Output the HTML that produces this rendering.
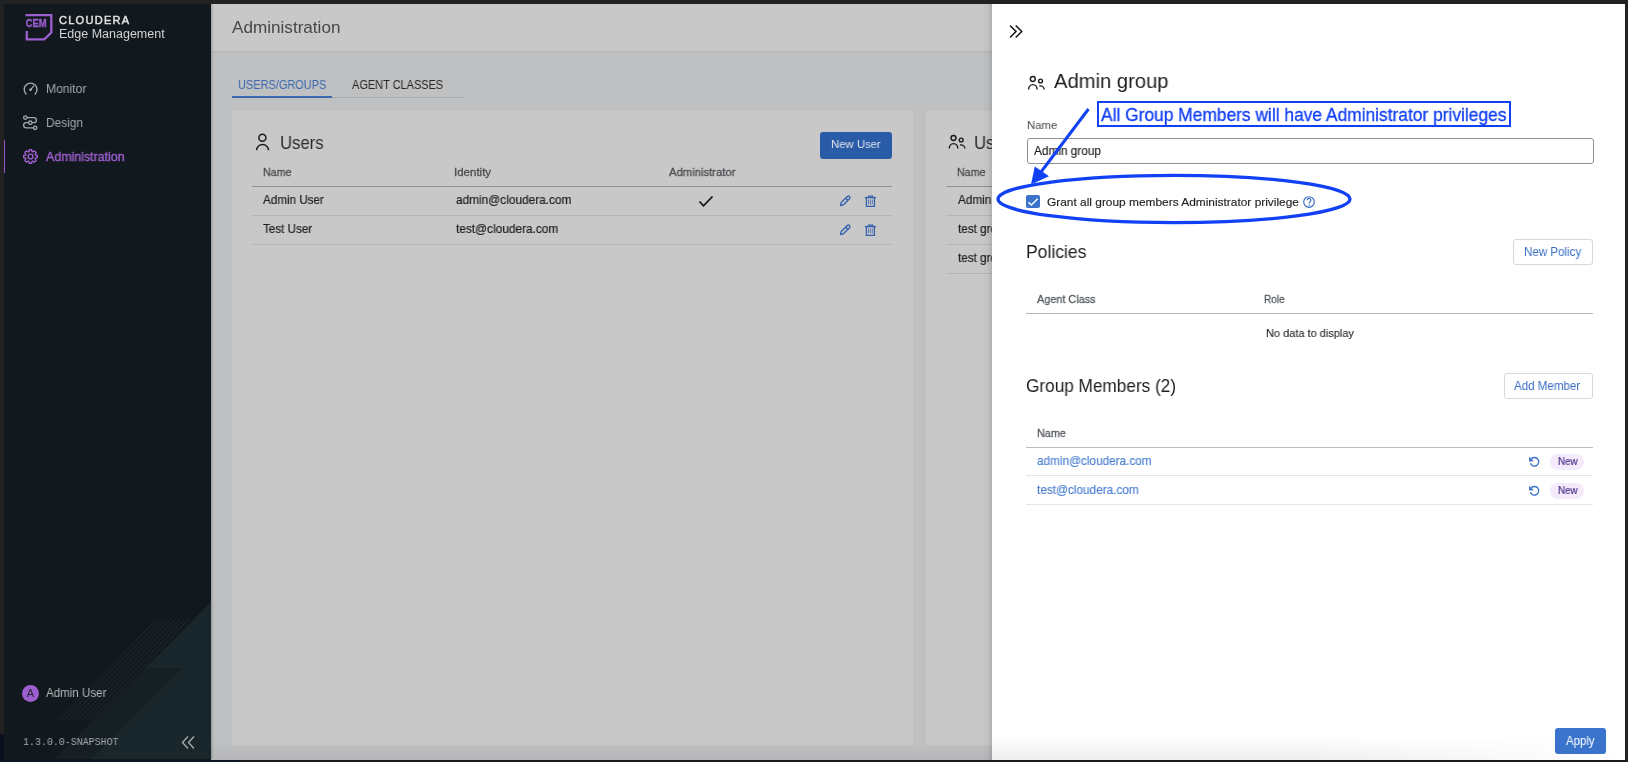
<!DOCTYPE html>
<html><head><meta charset="utf-8">
<style>
*{margin:0;padding:0;box-sizing:border-box}
html,body{width:1628px;height:762px;overflow:hidden;background:#222222;font-family:"Liberation Sans",sans-serif}
.a{position:absolute}
.t{position:absolute;line-height:1;white-space:nowrap;will-change:transform}
</style></head>
<body>
<!-- SIDEBAR -->
<div class="a" style="left:4px;top:4px;width:207px;height:755.5px;background:#12191e"></div>
<svg class="a" style="left:4px;top:4px" width="207" height="755" viewBox="4 4 207 755">
  <polygon points="211,602 145,668 182,668 91,759 211,759" fill="#19262b"/>
  <polygon points="145,668 182,668 91,759 54,759" fill="#151f24"/>
  <g stroke="#1f2b30" stroke-width="0.9"><line x1="157.0" y1="619" x2="59.0" y2="720"/><line x1="161.6" y1="619" x2="63.6" y2="720"/><line x1="166.2" y1="619" x2="68.2" y2="720"/><line x1="170.8" y1="619" x2="72.8" y2="720"/><line x1="175.4" y1="619" x2="77.4" y2="720"/><line x1="180.0" y1="619" x2="82.0" y2="720"/><line x1="184.6" y1="619" x2="86.6" y2="720"/><line x1="189.2" y1="619" x2="91.2" y2="720"/></g>
</svg>
<!-- logo -->
<svg class="a" style="left:24px;top:12px;will-change:transform" width="32" height="32" viewBox="24 12 32 32">
  <path d="M25.5 15.1 H51.3 V32.6 L44.3 39.4 H26.8 V31" fill="none" stroke="#9b5ecf" stroke-width="2.3"/>
  <text x="25.7" y="27.4" font-family="Liberation Sans" font-weight="bold" font-size="10.3" fill="#9b5ecf" stroke="#9b5ecf" stroke-width="0.3" textLength="21" lengthAdjust="spacingAndGlyphs">CEM</text>
</svg>
<!-- nav icons -->
<svg class="a" style="left:18px;top:78px" width="24" height="56" viewBox="18 78 24 56">
  <path d="M26.07 94.03 A6.4 6.4 0 1 1 35.13 94.03" fill="none" stroke="#a4a8ab" stroke-width="1.4" stroke-linecap="round"/>
  <path d="M30.5 89.8 L33.6 86.2" stroke="#a4a8ab" stroke-width="1.3" stroke-linecap="round"/>
  <circle cx="30.5" cy="89.8" r="1.35" fill="#a4a8ab"/>
  <g fill="none" stroke="#a4a8ab" stroke-width="1.3">
  <circle cx="25.3" cy="117.6" r="1.7"/>
  <path d="M27 117.6 H33.8 A2.55 2.55 0 0 1 33.8 122.7 H32"/>
  <circle cx="30.3" cy="122.7" r="1.7"/>
  <path d="M28.6 122.7 H26.2 A2.55 2.55 0 0 0 26.2 127.8 H33.5"/>
  <circle cx="35.2" cy="127.8" r="1.7"/>
  </g>
</svg>
<div class="a" style="left:4px;top:139.5px;width:1.3px;height:33.3px;background:#9257c6"></div>
<svg class="a" style="left:22px;top:148px" width="17" height="17" viewBox="0 0 17 17">
  <path id="gear" fill="none" stroke="#a060d2" stroke-width="1.4" stroke-linejoin="round" d="M13.47 6.96 L15.30 7.33 L15.30 9.67 L13.47 10.04 L13.10 10.93 L14.13 12.48 L12.48 14.13 L10.93 13.10 L10.04 13.47 L9.67 15.30 L7.33 15.30 L6.96 13.47 L6.07 13.10 L4.52 14.13 L2.87 12.48 L3.90 10.93 L3.53 10.04 L1.70 9.67 L1.70 7.33 L3.53 6.96 L3.90 6.07 L2.87 4.52 L4.52 2.87 L6.07 3.90 L6.96 3.53 L7.33 1.70 L9.67 1.70 L10.04 3.53 L10.93 3.90 L12.48 2.87 L14.13 4.52 L13.10 6.07 Z"/>
  <circle cx="8.5" cy="8.5" r="2.4" fill="none" stroke="#a060d2" stroke-width="1.4"/>
</svg>
<!-- user -->
<div class="a" style="left:21.8px;top:684.6px;width:17px;height:17px;border-radius:50%;background:#9d5fcf"></div>
<div class="t" style="left:21.8px;top:688.2px;width:17px;text-align:center;font-size:11px;color:#22202a">A</div>
<svg class="a" style="left:180px;top:735px" width="16" height="15" viewBox="0 0 16 15">
  <path d="M8 1.5 L2.5 7.5 L8 13.5 M14 1.5 L8.5 7.5 L14 13.5" fill="none" stroke="#a6a9ab" stroke-width="1.4"/>
</svg>

<!-- MAIN -->
<div class="a" style="left:211px;top:4px;width:781px;height:755.5px;background:#bfc0c2"></div>
<div class="a" style="left:211px;top:4px;width:781px;height:46.6px;background:#c8c8c8"></div>
<div class="a" style="left:211px;top:50.6px;width:781px;height:3px;background:linear-gradient(to bottom,rgba(0,0,0,0.045),rgba(0,0,0,0))"></div>
<div class="a" style="left:211px;top:4px;width:3px;height:755px;background:linear-gradient(to right,rgba(0,0,0,0.18),rgba(0,0,0,0))"></div>
<div class="a" style="left:332px;top:97px;width:131px;height:1px;background:#a8a9ab"></div>
<div class="a" style="left:232px;top:95.5px;width:100px;height:2px;background:#3b68b0"></div>
<!-- card 1 -->
<div class="a" style="left:232px;top:111px;width:681px;height:634px;background:#c8c8c8"></div>

<div class="a" style="left:819.8px;top:132px;width:72.4px;height:27px;background:#2a5ba6;border-radius:3px"></div>
<div class="a" style="left:252px;top:185.5px;width:640px;height:1.5px;background:#8e9092"></div>
<svg class="a" style="left:698px;top:195px" width="16" height="13" viewBox="0 0 16 13">
  <path d="M1.5 6.5 L5.5 10.8 L14.5 1.5" fill="none" stroke="#111" stroke-width="1.7"/>
</svg>
<div class="a" style="left:252px;top:215px;width:640px;height:1px;background:#b5b6b8"></div>
<div class="a" style="left:252px;top:244px;width:640px;height:1px;background:#b5b6b8"></div>
<!-- card 2 -->
<div class="a" style="left:926px;top:111px;width:80px;height:634px;background:#c8c8c8"></div>

<div class="a" style="left:946px;top:185.5px;width:60px;height:1.5px;background:#8e9092"></div>
<div class="a" style="left:946px;top:215px;width:60px;height:1px;background:#b5b6b8"></div>
<div class="a" style="left:946px;top:244px;width:60px;height:1px;background:#b5b6b8"></div>
<div class="a" style="left:946px;top:273px;width:60px;height:1px;background:#b5b6b8"></div>
<svg class="a" style="left:0;top:0" width="1000" height="300" viewBox="0 0 1000 300">
  <g fill="none" stroke="#1a1a1a" stroke-width="1.5">
  <circle cx="262.4" cy="137.8" r="3.5"/>
  <path d="M256.6 150.2 A5.95 5.6 0 0 1 268.5 150.2"/>
  </g>
  <g fill="none" stroke="#1a1a1a" stroke-width="1.4" transform="translate(-79.3,59)"><circle cx="1032.8" cy="79" r="2.45"/><path d="M1028.6 89.6 A4.25 5 0 0 1 1037.1 89.6"/><circle cx="1040.5" cy="81" r="1.9"/><path d="M1039.3 85.9 H1040 A4.2 3.7 0 0 1 1044.2 89.6"/></g>
  <g fill="none" stroke="#3562ad" stroke-width="1.35" stroke-linejoin="round">
  <g transform="translate(0,0)"><path d="M840.6 205.5 L841.2 202.6 L847.3 196.5 A1.55 1.55 0 0 1 849.5 198.7 L843.4 204.8 Z"/><path d="M845.6 198.1 L847.9 200.4"/></g><g transform="translate(0,29)"><path d="M840.6 205.5 L841.2 202.6 L847.3 196.5 A1.55 1.55 0 0 1 849.5 198.7 L843.4 204.8 Z"/><path d="M845.6 198.1 L847.9 200.4"/></g>
  </g>
  <g fill="none" stroke="#3562ad">
  <g transform="translate(0,0)"><path d="M864.8 197.6 H876" stroke-width="1.4"/><path d="M868.6 197.2 V196.2 H872.6 V197.2" stroke-width="1.3"/><path d="M866.4 197.8 V206.3 H874.4 V197.8" stroke-width="1.3"/><path d="M868.5 199.6 V204.4 M870.4 199.6 V204.4 M872.3 199.6 V204.4" stroke-width="0.75"/></g><g transform="translate(0,29)"><path d="M864.8 197.6 H876" stroke-width="1.4"/><path d="M868.6 197.2 V196.2 H872.6 V197.2" stroke-width="1.3"/><path d="M866.4 197.8 V206.3 H874.4 V197.8" stroke-width="1.3"/><path d="M868.5 199.6 V204.4 M870.4 199.6 V204.4 M872.3 199.6 V204.4" stroke-width="0.75"/></g>
  </g>
</svg>
<div class="a" style="left:211px;top:742px;width:781px;height:17.5px;background:linear-gradient(to bottom,rgba(0,0,0,0),rgba(0,0,0,0.05))"></div>
<div class="t" style="left:59.30px;top:14.87px;font-size:11px;color:#e0e0e0;font-weight:normal;letter-spacing:1.28px;-webkit-text-stroke:0.45px #e0e0e0">CLOUDERA</div>
<div class="t" style="left:59.00px;top:27.98px;font-size:12.5px;color:#d2d2d2;font-weight:normal;">Edge Management</div>
<div class="t" style="left:46.00px;top:82.88px;font-size:12.5px;color:#a4a8ab;font-weight:normal;transform:scaleX(0.97);transform-origin:0 0;">Monitor</div>
<div class="t" style="left:46.00px;top:116.58px;font-size:12.5px;color:#a4a8ab;font-weight:normal;transform:scaleX(0.95);transform-origin:0 0;">Design</div>
<div class="t" style="left:46.00px;top:150.76px;font-size:12.6px;color:#a060d2;font-weight:normal;transform:scaleX(0.985);transform-origin:0 0;-webkit-text-stroke:0.35px #a060d2">Administration</div>
<div class="t" style="left:46.00px;top:687.10px;font-size:12.3px;color:#b4b6b8;font-weight:normal;transform:scaleX(0.94);transform-origin:0 0;">Admin User</div>
<div class="t" style="left:22.50px;top:736.77px;font-size:11px;color:#a6a9ab;font-weight:normal;font-family:'Liberation Mono',monospace;transform:scaleX(0.905);transform-origin:0 0;">1.3.0.0-SNAPSHOT</div>
<div class="t" style="left:232.00px;top:19.72px;font-size:16.8px;color:#474747;font-weight:normal;transform:scaleX(1.02);transform-origin:0 0;">Administration</div>
<div class="t" style="left:238.00px;top:78.86px;font-size:12.6px;color:#3b68b0;font-weight:normal;transform:scaleX(0.87);transform-origin:0 0;">USERS/GROUPS</div>
<div class="t" style="left:352.30px;top:78.86px;font-size:12.6px;color:#262626;font-weight:normal;transform:scaleX(0.87);transform-origin:0 0;">AGENT CLASSES</div>
<div class="t" style="left:280.00px;top:134.89px;font-size:17.8px;color:#2c2c2c;font-weight:normal;transform:scaleX(0.94);transform-origin:0 0;">Users</div>
<div class="t" style="left:830.60px;top:139.07px;font-size:11.8px;color:#dfe4ec;font-weight:normal;transform:scaleX(0.96);transform-origin:0 0;">New User</div>
<div class="t" style="left:262.70px;top:167.00px;font-size:11.5px;color:#4a4d50;font-weight:normal;transform:scaleX(0.93);transform-origin:0 0;-webkit-text-stroke:0.3px #4a4d50">Name</div>
<div class="t" style="left:454.30px;top:167.00px;font-size:11.5px;color:#4a4d50;font-weight:normal;-webkit-text-stroke:0.3px #4a4d50">Identity</div>
<div class="t" style="left:668.50px;top:167.00px;font-size:11.5px;color:#4a4d50;font-weight:normal;transform:scaleX(0.98);transform-origin:0 0;-webkit-text-stroke:0.3px #4a4d50">Administrator</div>
<div class="t" style="left:263.00px;top:193.76px;font-size:12.6px;color:#1e1e1e;font-weight:normal;transform:scaleX(0.925);transform-origin:0 0;-webkit-text-stroke:0.2px #1e1e1e">Admin User</div>
<div class="t" style="left:455.50px;top:193.76px;font-size:12.6px;color:#1e1e1e;font-weight:normal;transform:scaleX(0.94);transform-origin:0 0;-webkit-text-stroke:0.2px #1e1e1e">admin@cloudera.com</div>
<div class="t" style="left:263.00px;top:223.26px;font-size:12.6px;color:#1e1e1e;font-weight:normal;transform:scaleX(0.925);transform-origin:0 0;-webkit-text-stroke:0.2px #1e1e1e">Test User</div>
<div class="t" style="left:455.50px;top:223.26px;font-size:12.6px;color:#1e1e1e;font-weight:normal;transform:scaleX(0.94);transform-origin:0 0;-webkit-text-stroke:0.2px #1e1e1e">test@cloudera.com</div>
<div class="t" style="left:974.00px;top:134.89px;font-size:17.8px;color:#2c2c2c;font-weight:normal;transform:scaleX(0.94);transform-origin:0 0;">Users</div>
<div class="t" style="left:956.80px;top:167.00px;font-size:11.5px;color:#4a4d50;font-weight:normal;transform:scaleX(0.93);transform-origin:0 0;-webkit-text-stroke:0.3px #4a4d50">Name</div>
<div class="t" style="left:957.50px;top:193.76px;font-size:12.6px;color:#1e1e1e;font-weight:normal;transform:scaleX(0.93);transform-origin:0 0;-webkit-text-stroke:0.2px #1e1e1e">Admin group</div>
<div class="t" style="left:957.50px;top:223.26px;font-size:12.6px;color:#1e1e1e;font-weight:normal;transform:scaleX(0.93);transform-origin:0 0;-webkit-text-stroke:0.2px #1e1e1e">test group</div>
<div class="t" style="left:957.50px;top:252.26px;font-size:12.6px;color:#1e1e1e;font-weight:normal;transform:scaleX(0.93);transform-origin:0 0;-webkit-text-stroke:0.2px #1e1e1e">test group</div>
<!-- drawer shadow -->
<div class="a" style="left:983px;top:4px;width:9px;height:755.5px;background:linear-gradient(to right,rgba(0,0,0,0),rgba(0,0,0,0.04) 60%,rgba(0,0,0,0.13))"></div>

<!-- DRAWER -->
<div class="a" style="left:992px;top:4px;width:633px;height:755.5px;background:#ffffff"></div>
<svg class="a" style="left:1008px;top:23px" width="16" height="16" viewBox="0 0 16 16">
  <path d="M2 2.5 L8 8.5 L2 14.5 M7.7 2.5 L13.7 8.5 L7.7 14.5" fill="none" stroke="#1a1a1a" stroke-width="1.6"/>
</svg>
<svg class="a" style="left:1000px;top:60px" width="60" height="40" viewBox="1000 60 60 40">
  <g fill="none" stroke="#1a1a1a" stroke-width="1.4"><circle cx="1032.8" cy="79" r="2.45"/><path d="M1028.6 89.6 A4.25 5 0 0 1 1037.1 89.6"/><circle cx="1040.5" cy="81" r="1.9"/><path d="M1039.3 85.9 H1040 A4.2 3.7 0 0 1 1044.2 89.6"/></g>
</svg>
<div class="a" style="left:1026.5px;top:137.5px;width:567px;height:26.5px;border:1px solid #8f9194;border-radius:3px"></div>
<div class="a" style="left:1026px;top:194.5px;width:13.6px;height:13.4px;background:#3a72cc;border-radius:2px"></div>
<svg class="a" style="left:1026px;top:194.5px" width="14" height="14" viewBox="1026 194.5 14 14">
  <path d="M1028.4 201.8 L1031.3 204.6 L1037.7 198.2" fill="none" stroke="#fff" stroke-width="1.4"/>
</svg>
<svg class="a" style="left:1300px;top:193px" width="18" height="18" viewBox="1300 193 18 18">
  <circle cx="1309" cy="202" r="5.3" fill="none" stroke="#3a6fc6" stroke-width="1.15"/>
  <path d="M1307.2 200.3 A1.85 1.85 0 1 1 1309.9 201.9 Q1309.1 202.4 1309.1 203.6" fill="none" stroke="#3a6fc6" stroke-width="1.2"/>
  <circle cx="1309.1" cy="205.3" r="0.7" fill="#3a6fc6"/>
</svg>
<div class="a" style="left:1513px;top:238.8px;width:80.3px;height:26.3px;border:1px solid #d6d9dc;border-radius:3px"></div>
<div class="a" style="left:1026px;top:313px;width:567px;height:1.2px;background:#b0b7bd"></div>
<div class="a" style="left:1504px;top:372.5px;width:89px;height:26.5px;border:1px solid #d6d9dc;border-radius:3px"></div>
<div class="a" style="left:1026px;top:446.5px;width:567px;height:1.5px;background:#b7bec4"></div>
<div class="a" style="left:1026px;top:475px;width:567px;height:1px;background:#e4e6e8"></div>
<div class="a" style="left:1026px;top:504px;width:567px;height:1px;background:#e4e6e8"></div>
<svg class="a" style="left:1520px;top:450px" width="24" height="22" viewBox="1520 450 24 22">
  <path d="M1531.36 458.76 A4.3 4.3 0 1 1 1530.36 463.27" fill="none" stroke="#3a6fc6" stroke-width="1.3"/>
  <polygon points="1529.1,456.7 1529.1,461.5 1533.8,461.3" fill="#3a6fc6"/>
</svg>
<div class="a" style="left:1550.3px;top:453.7px;width:33.7px;height:16.5px;border-radius:8.25px;background:#f3eafc"></div>
<svg class="a" style="left:1520px;top:479px" width="24" height="22" viewBox="1520 450 24 22">
  <path d="M1531.36 458.76 A4.3 4.3 0 1 1 1530.36 463.27" fill="none" stroke="#3a6fc6" stroke-width="1.3"/>
  <polygon points="1529.1,456.7 1529.1,461.5 1533.8,461.3" fill="#3a6fc6"/>
</svg>
<div class="a" style="left:1550.3px;top:482.7px;width:33.7px;height:16.5px;border-radius:8.25px;background:#f3eafc"></div>

<div class="a" style="left:1554.8px;top:727.8px;width:51.2px;height:26.6px;background:#3a74cc;border-radius:3px"></div>
<div class="a" style="left:992px;top:736px;width:633px;height:23.5px;background:linear-gradient(to bottom,rgba(0,0,0,0),rgba(0,0,0,0.065));-webkit-mask-image:linear-gradient(to right,#000 0%,#000 50%,rgba(0,0,0,0.3) 85%,rgba(0,0,0,0) 100%)"></div>
<!-- annotations -->
<div class="a" style="left:1097.2px;top:100.7px;width:413.8px;height:26.8px;border:2.1px solid #1240f4"></div>
<div class="t" style="left:1053.80px;top:71.33px;font-size:20.5px;color:#1e1e1e;font-weight:normal;transform:scaleX(0.985);transform-origin:0 0;">Admin group</div>
<div class="t" style="left:1026.50px;top:119.97px;font-size:11.8px;color:#585b5e;font-weight:normal;transform:scaleX(0.96);transform-origin:0 0;-webkit-text-stroke:0.12px #585b5e">Name</div>
<div class="t" style="left:1034.00px;top:144.94px;font-size:12px;color:#1e1e1e;font-weight:normal;transform:scaleX(0.985);transform-origin:0 0;-webkit-text-stroke:0.15px #1e1e1e">Admin group</div>
<div class="t" style="left:1046.60px;top:195.68px;font-size:11.7px;color:#1e1e1e;font-weight:normal;transform:scaleX(1.018);transform-origin:0 0;-webkit-text-stroke:0.15px #1e1e1e">Grant all group members Administrator privilege</div>
<div class="t" style="left:1025.60px;top:244.49px;font-size:17.8px;color:#1e1e1e;font-weight:normal;transform:scaleX(0.985);transform-origin:0 0;">Policies</div>
<div class="t" style="left:1524.00px;top:246.00px;font-size:12.3px;color:#3a6fc6;font-weight:normal;transform:scaleX(0.94);transform-origin:0 0;">New Policy</div>
<div class="t" style="left:1036.70px;top:293.54px;font-size:11.2px;color:#555a5f;font-weight:normal;transform:scaleX(0.97);transform-origin:0 0;-webkit-text-stroke:0.3px #555a5f">Agent Class</div>
<div class="t" style="left:1263.70px;top:293.54px;font-size:11.2px;color:#555a5f;font-weight:normal;transform:scaleX(0.9);transform-origin:0 0;-webkit-text-stroke:0.3px #555a5f">Role</div>
<div class="t" style="left:1266.00px;top:327.50px;font-size:11.5px;color:#2a2a2a;font-weight:normal;transform:scaleX(0.955);transform-origin:0 0;-webkit-text-stroke:0.12px #2a2a2a">No data to display</div>
<div class="t" style="left:1025.80px;top:378.29px;font-size:17.8px;color:#1e1e1e;font-weight:normal;transform:scaleX(0.967);transform-origin:0 0;">Group Members (2)</div>
<div class="t" style="left:1514.40px;top:379.60px;font-size:12.3px;color:#3a6fc6;font-weight:normal;transform:scaleX(0.94);transform-origin:0 0;">Add Member</div>
<div class="t" style="left:1036.50px;top:427.50px;font-size:11.5px;color:#555a5f;font-weight:normal;transform:scaleX(0.94);transform-origin:0 0;-webkit-text-stroke:0.3px #555a5f">Name</div>
<div class="t" style="left:1037.00px;top:454.61px;font-size:12.2px;color:#4a7fd0;font-weight:normal;transform:scaleX(0.965);transform-origin:0 0;-webkit-text-stroke:0.15px #4a7fd0">admin@cloudera.com</div>
<div class="t" style="left:1037.00px;top:483.61px;font-size:12.2px;color:#4a7fd0;font-weight:normal;transform:scaleX(0.967);transform-origin:0 0;-webkit-text-stroke:0.15px #4a7fd0">test@cloudera.com</div>
<div class="t" style="left:1557.60px;top:457.35px;font-size:10.4px;color:#52348a;font-weight:normal;transform:scaleX(0.94);transform-origin:0 0;-webkit-text-stroke:0.2px #52348a">New</div>
<div class="t" style="left:1557.60px;top:486.35px;font-size:10.4px;color:#52348a;font-weight:normal;transform:scaleX(0.94);transform-origin:0 0;-webkit-text-stroke:0.2px #52348a">New</div>
<div class="t" style="left:1566.00px;top:735.00px;font-size:12.3px;color:#ffffff;font-weight:normal;transform:scaleX(0.93);transform-origin:0 0;">Apply</div>
<div class="t" style="left:1101.30px;top:106.43px;font-size:18.2px;color:#1240f4;font-weight:normal;transform:scaleX(0.955);transform-origin:0 0;-webkit-text-stroke:0.3px #1240f4">All Group Members will have Administrator privileges</div>
<svg class="a" style="left:0;top:0" width="1628" height="762" viewBox="0 0 1628 762">
  <ellipse cx="1174" cy="199" rx="176" ry="23.6" fill="none" stroke="#1240f4" stroke-width="3.3"/>
  <line x1="1088.5" y1="109" x2="1041" y2="172" stroke="#1240f4" stroke-width="3"/>
  <polygon points="1031,184.5 1034.8,166.5 1049,176.2" fill="#1240f4"/>
</svg>

<!-- outer border -->
<div class="a" style="left:0;top:734px;width:4px;height:28px;background:#0b111c"></div>
<div class="a" style="left:0;top:759.5px;width:1628px;height:3px;background:#1c1c1c"></div>
<div class="a" style="left:0;top:759.5px;width:240px;height:3px;background:#0d1422"></div>

</body></html>
